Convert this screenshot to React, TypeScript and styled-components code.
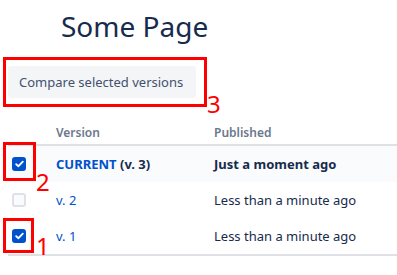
import React from 'react';
import styled, { createGlobalStyle } from 'styled-components';

const colors = {
  text: '#172b4d',
  subtle: '#42526e',
  muted: '#6b778c',
  link: '#0052cc',
  border: '#dfe1e6',
  buttonBg: '#f4f5f7',
  rowHighlight: '#fafbfc',
  marker: '#ff0000',
};

const GlobalStyle = createGlobalStyle`
  html, body {
    margin: 0;
    padding: 0;
    background: #ffffff;
    font-family: 'Noto Sans', 'Open Sans', sans-serif;
    color: ${colors.text};
  }
`;

const Stage = styled.div`
  position: relative;
  width: 397px;
  height: 275px;
  overflow: hidden;
  padding: 0 0 0 8px;
  box-sizing: border-box;
`;

const Title = styled.h1`
  margin: 0;
  padding: 8px 0 0 53px;
  font-size: 28px;
  font-weight: 400;
  line-height: 36px;
  color: ${colors.text};
`;

const Toolbar = styled.div`
  display: flex;
  padding-top: 22px;
`;

const Button = styled.button`
  height: 32px;
  width: 188px;
  padding: 0 0 0 11px;
  border: none;
  border-radius: 3px;
  background: ${colors.buttonBg};
  color: ${colors.subtle};
  font-family: inherit;
  font-size: 13px;
  text-align: left;
`;

const Table = styled.div`
  margin-top: 22px;
  border-bottom: 2px solid ${colors.border};
`;

const Row = styled.div<{ $head?: boolean; $highlight?: boolean }>`
  display: grid;
  grid-template-columns: 40px 158px 1fr;
  align-items: center;
  height: ${({ $head }) => ($head ? '24px' : '36px')};
  background: ${({ $highlight }) => ($highlight ? colors.rowHighlight : 'transparent')};
  border-bottom: ${({ $head }) => ($head ? `2px solid ${colors.border}` : 'none')};
`;

const HeadCell = styled.div`
  padding-left: 8px;
  font-size: 12px;
  font-weight: 600;
  color: ${colors.muted};
`;

const Cell = styled.div<{ $bold?: boolean }>`
  padding-left: 8px;
  font-size: 13px;
  font-weight: ${({ $bold }) => ($bold ? 700 : 400)};
  color: ${colors.text};
  white-space: nowrap;
`;

const VersionLink = styled.a<{ $bold?: boolean }>`
  color: ${colors.link};
  font-weight: ${({ $bold }) => ($bold ? 700 : 400)};
  text-decoration: none;
`;

const CheckCell = styled.div`
  padding-left: 4px;
  display: flex;
  align-items: center;
`;

const Box = styled.span<{ $checked?: boolean }>`
  width: 14px;
  height: 14px;
  box-sizing: border-box;
  border-radius: 3px;
  display: flex;
  align-items: center;
  justify-content: center;
  background: ${({ $checked }) => ($checked ? colors.link : colors.rowHighlight)};
  border: 2px solid ${({ $checked }) => ($checked ? colors.link : colors.border)};
`;

const Marker = styled.div`
  position: absolute;
  border: 3px solid ${colors.marker};
  box-sizing: border-box;
`;

const MarkerLabel = styled.span`
  position: absolute;
  color: ${colors.marker};
  font-family: 'Noto Sans', sans-serif;
  font-size: 24px;
  line-height: 1;
`;

const Checkbox = ({ checked }: { checked?: boolean }) => (
  <Box $checked={checked}>
    {checked && (
      <svg width="9" height="8" viewBox="0 0 9 8">
        <path d="M1.2 4.2 L3.5 6.2 L7.8 1.6" fill="none" stroke="#fff" strokeWidth="1.8" strokeLinecap="round" strokeLinejoin="round" />
      </svg>
    )}
  </Box>
);

const versions = [
  { id: 3, label: 'CURRENT', suffix: ' (v. 3)', published: 'Just a moment ago', checked: true, current: true },
  { id: 2, label: 'v. 2', published: 'Less than a minute ago', checked: false },
  { id: 1, label: 'v. 1', published: 'Less than a minute ago', checked: true },
];

export default function App() {
  return (
    <>
      <GlobalStyle />
      <Stage>
        <Title>Some Page</Title>
        <Toolbar>
          <Button>Compare selected versions</Button>
        </Toolbar>
        <Table>
          <Row $head>
            <HeadCell />
            <HeadCell>Version</HeadCell>
            <HeadCell>Published</HeadCell>
          </Row>
          {versions.map((v) => (
            <Row key={v.id} $highlight={v.current}>
              <CheckCell>
                <Checkbox checked={v.checked} />
              </CheckCell>
              <Cell $bold={v.current}>
                <VersionLink href="#" $bold={v.current}>
                  {v.label}
                </VersionLink>
                {v.suffix}
              </Cell>
              <Cell $bold={v.current}>{v.published}</Cell>
            </Row>
          ))}
        </Table>

        <Marker style={{ left: 3, top: 57, width: 204, height: 50 }} />
        <MarkerLabel style={{ left: 207, top: 92 }}>3</MarkerLabel>
        <Marker style={{ left: 3, top: 142, width: 33, height: 39 }} />
        <MarkerLabel style={{ left: 36, top: 170 }}>2</MarkerLabel>
        <Marker style={{ left: 3, top: 218, width: 31, height: 35 }} />
        <MarkerLabel style={{ left: 36, top: 234 }}>1</MarkerLabel>
      </Stage>
    </>
  );
}
